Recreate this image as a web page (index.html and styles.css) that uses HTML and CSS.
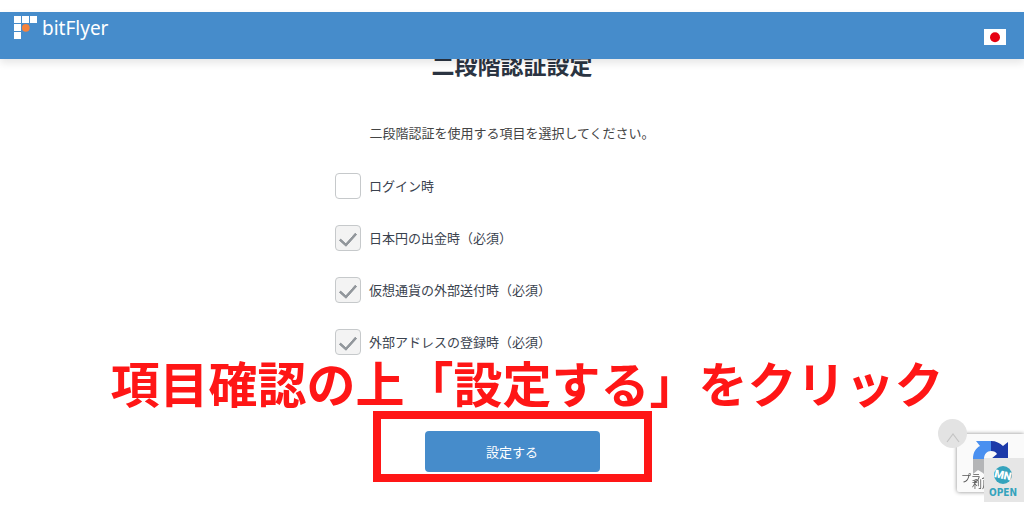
FILE: index.html
```
<!DOCTYPE html>
<html lang="ja">
<head>
  <meta charset="utf-8">
  <title>二段階認証設定</title>
  <link rel="stylesheet" href="styles.css">
</head>
<body>
  <header class="header">
    <a class="logo" href="#">
      <svg class="logo-mark" viewBox="0 0 24 24" aria-hidden="true">
        <g fill="#fff">
          <rect x="0" y="0" width="7" height="7"/>
          <rect x="8" y="0" width="7" height="7"/>
          <rect x="16" y="0" width="7" height="7"/>
          <rect x="0" y="8" width="7" height="7"/>
          <rect x="0" y="16" width="7" height="7"/>
        </g>
        <circle cx="11.8" cy="11.8" r="3.9" fill="#f5833c"/>
      </svg>
      <span>bitFlyer</span>
    </a>
    <button class="language" type="button" aria-label="日本語">
      <svg viewBox="0 0 22 16" aria-hidden="true">
        <rect width="22" height="16" fill="#fff"/>
        <circle cx="11" cy="8.3" r="5" fill="#e60012"/>
      </svg>
    </button>
  </header>

  <main class="content">
    <h1>二段階認証設定</h1>
    <form>
      <p class="lead">二段階認証を使用する項目を選択してください。</p>
      <div class="options">
        <label class="option"><input type="checkbox" name="login">ログイン時</label>
        <label class="option"><input type="checkbox" name="withdraw" checked disabled>日本円の出金時（必須）</label>
        <label class="option"><input type="checkbox" name="send" checked disabled>仮想通貨の外部送付時（必須）</label>
        <label class="option"><input type="checkbox" name="address" checked disabled>外部アドレスの登録時（必須）</label>
      </div>
      <p class="guide">項目確認の上「設定する」をクリック</p>
      <div class="highlight">
        <button class="submit" type="submit">設定する</button>
      </div>
    </form>
  </main>

  <aside class="privacy">
    <svg class="privacy-logo" viewBox="0 0 36 36" aria-hidden="true">
      <path fill="#4a90f0" d="M0 18C0 11 3 7 7 5L3 0h15v10c-4 0-7 3-7 8z"/>
      <path fill="#1c3aa9" d="M18 0c5 0 9 2 12 5l5-4v17H18l6-5c-1-2-3-3-6-3z"/>
      <path fill="#b4b5b7" d="M0 18h11c0 4 3 7 7 7 2 0 4-1 5-2l7 7c-3 4-7 6-12 6-3 0-6-1-8-4l-5-3-5 4z"/>
    </svg>
    <a class="privacy-link" href="#">プライバシー</a>
    <a class="privacy-link terms" href="#">利用規約</a>
  </aside>
  <a class="to-top" href="#" aria-label="ページの先頭へ">
    <svg viewBox="0 0 14 10" aria-hidden="true">
      <path d="M1 9l6-8 6 8" fill="none" stroke="#c4c4c4" stroke-width="1.2"/>
    </svg>
  </a>
  <button class="open" type="button">
    <svg viewBox="0 0 20 20" aria-hidden="true">
      <circle cx="10" cy="10" r="9" fill="#35a3bd"/>
      <text class="open-mark" x="10" y="14" text-anchor="middle" transform="rotate(12 10 10)">MN</text>
    </svg>
    OPEN
  </button>
</body>
</html>
```

FILE: styles.css
```
* {
  box-sizing: border-box;
}
body {
  margin: 0;
  padding-top: 12px;
  font-family: "Noto Sans CJK JP", sans-serif;
  font-size: 13px;
  color: #444;
  background: #fff;
  overflow: hidden;
}
button {
  font-family: inherit;
  border: none;
  cursor: pointer;
}
h1, p {
  margin: 0;
}

.header {
  position: relative;
  z-index: 1;
  display: flex;
  justify-content: space-between;
  align-items: flex-start;
  height: 47px;
  padding: 4px 18px 0 14px;
  background: #468ccb;
  box-shadow: 0 4px 8px rgba(0, 0, 0, 0.1);
}
.logo {
  display: flex;
  gap: 4px;
  color: #fff;
  font-family: "Noto Sans", sans-serif;
  font-size: 19px;
  line-height: 24px;
  text-decoration: none;
}
.logo-mark {
  width: 24px;
  height: 24px;
}
.language {
  width: 22px;
  height: 16px;
  margin-top: 13px;
  padding: 0;
  background: none;
}
.language svg {
  display: block;
}

.content {
  margin-top: -8px;
}
h1 {
  font-size: 23px;
  line-height: 26px;
  text-align: center;
  color: #2b3442;
}
.lead {
  margin-top: 46px;
  line-height: 20px;
  text-align: center;
}
.options {
  display: flex;
  flex-direction: column;
  gap: 26px;
  max-width: 354px;
  margin: 30px auto 0;
}
.option {
  display: flex;
  align-items: center;
  gap: 8px;
  color: #3a424e;
  line-height: 20px;
}
.option input {
  appearance: none;
  display: flex;
  justify-content: center;
  width: 26px;
  height: 26px;
  margin: 0;
  border: 1px solid #c6c9cb;
  border-radius: 4px;
  background: #fff;
}
.option input:disabled {
  background: #f3f3f3;
}
.option input:checked::before {
  content: "";
  width: 7px;
  height: 14px;
  margin-top: 3px;
  border: solid #92979c;
  border-width: 0 3px 3px 0;
  border-radius: 1px;
  transform: rotate(42deg);
}
.option input:checked {
  align-items: flex-start;
}

.guide {
  margin-top: 2px;
  padding-left: 30px;
  color: #ff1616;
  font-size: 49px;
  font-weight: 700;
  line-height: 50px;
  text-align: center;
  white-space: nowrap;
}
.highlight {
  display: flex;
  max-width: 279px;
  margin: 4px auto 0;
  padding: 12px 44px 2px;
  border: 8px solid #ff1616;
}
.submit {
  flex: 1;
  padding: 10px;
  border-radius: 4px;
  background: #468ccb;
  color: #fff;
  font-size: 13px;
  line-height: 21px;
}

/* floating widgets */
.privacy {
  position: fixed;
  right: 0;
  bottom: 20px;
  width: 67px;
  height: 58px;
  padding: 7px 0 0 4px;
  border-radius: 2px 0 0 2px;
  background: #fafafa;
  box-shadow: 0 0 4px #888;
  overflow: hidden;
}
.privacy-logo {
  display: block;
  width: 36px;
  height: 36px;
  margin-left: 12px;
}
.privacy-link {
  display: block;
  margin-top: -4px;
  color: #555;
  font-size: 10px;
  line-height: 10px;
  text-decoration: none;
  white-space: nowrap;
}
.terms {
  padding-left: 11px;
}
.to-top {
  position: fixed;
  right: 57px;
  bottom: 64px;
  display: flex;
  justify-content: center;
  align-items: center;
  width: 29px;
  height: 29px;
  padding-top: 8px;
  border-radius: 50%;
  background: #e3e3e3;
}
.to-top svg {
  width: 14px;
  height: 10px;
}
.open {
  position: fixed;
  right: 0;
  bottom: 10px;
  display: flex;
  flex-direction: column;
  align-items: center;
  width: 40px;
  height: 44px;
  padding: 7px 2px 0 0;
  background: #e6e6e6;
  color: #35a3bd;
  font-family: "Liberation Sans Narrow", "DejaVu Sans Condensed", sans-serif;
  font-size: 10px;
  font-weight: 700;
  line-height: 16px;
}
.open svg {
  width: 20px;
  height: 20px;
}
.open-mark {
  fill: #fff;
  font-family: Roboto, sans-serif;
  font-size: 11px;
  font-weight: 900;
}
```
